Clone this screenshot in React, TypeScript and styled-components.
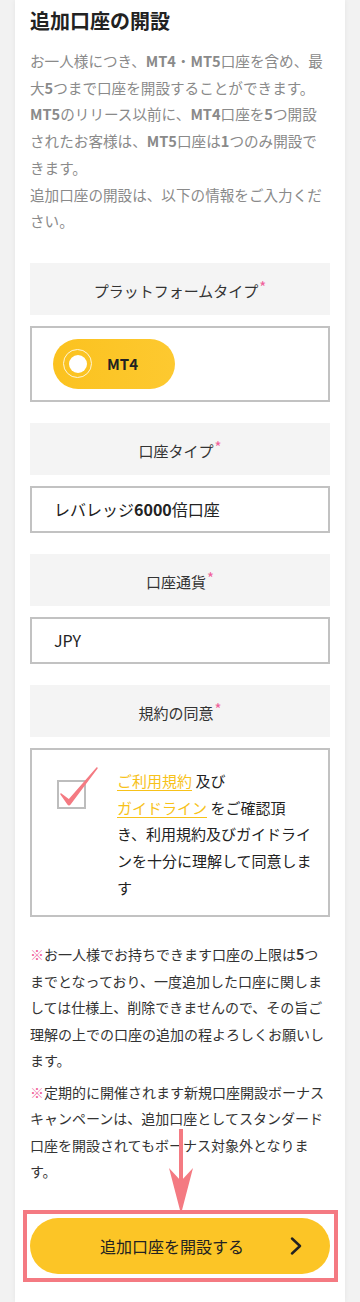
import React from "react";
import styled, {createGlobalStyle} from "styled-components";

const GlobalStyle = createGlobalStyle`
    body {
        margin: 0;
        background-color: #f2f2f2;
        font-family: "Noto Sans CJK JP", "Noto Sans", sans-serif;
        color: #333;
    }
`

const PINK = "#f47a82";

export default function App(){
    return(
        <>
            <GlobalStyle/>
            <Card>
                <Title>追加口座の開設</Title>
                <Intro>
                    お一人様につき、<b>MT4</b>・<b>MT5</b>口座を含め、最大<b>5</b>つまで口座を開設することができます。<br/>
                    <b>MT5</b>のリリース以前に、<b>MT4</b>口座を<b>5</b>つ開設されたお客様は、<b>MT5</b>口座は<b>1</b>つのみ開設できます。<br/>
                    追加口座の開設は、以下の情報をご入力ください。
                </Intro>

                <Label>プラットフォームタイプ<Required>*</Required></Label>
                <Field $padding="11px 21px">
                    <Pill>
                        <Radio/>
                        MT4
                    </Pill>
                </Field>

                <Label>口座タイプ<Required>*</Required></Label>
                <Field>レバレッジ<b>6000</b>倍口座</Field>

                <Label>口座通貨<Required>*</Required></Label>
                <Field>JPY</Field>

                <Label>規約の同意<Required>*</Required></Label>
                <AgreeBox>
                    <CheckBox>
                        <svg width="44" height="44" viewBox="0 0 44 44">
                            <path d="M4 28 L11 38 Q12 39.5 13 38 L40 2 L12 34 Z" fill={PINK} stroke={PINK} strokeWidth="1.5" strokeLinejoin="round"/>
                        </svg>
                    </CheckBox>
                    <AgreeText>
                        <Link>ご利用規約</Link> 及び<br/>
                        <Link>ガイドライン</Link> をご確認頂き、利用規約及びガイドラインを十分に理解して同意します
                    </AgreeText>
                </AgreeBox>

                <Note>
                    <Mark>※</Mark>お一人様でお持ちできます口座の上限は<b>5</b>つまでとなっており、一度追加した口座に関しましては仕様上、削除できませんので、その旨ご理解の上での口座の追加の程よろしくお願いします。
                </Note>
                <Note>
                    <Mark>※</Mark>定期的に開催されます新規口座開設ボーナスキャンペーンは、追加口座としてスタンダード口座を開設されてもボーナス対象外となります。
                </Note>

                <ButtonWrap>
                    <Arrow width="26" height="86" viewBox="0 0 26 86">
                        <rect x="11" y="0" width="4" height="60" fill={PINK}/>
                        <path d="M1 39 L13 52 L25 39 L13 85 Z" fill={PINK}/>
                    </Arrow>
                    <Highlight/>
                    <SubmitButton>
                        追加口座を開設する
                        <Chevron width="12" height="18" viewBox="0 0 12 18">
                            <path d="M2 1.5 L10 9 L2 16.5" fill="none" stroke="#222" strokeWidth="2.4" strokeLinecap="round" strokeLinejoin="round"/>
                        </Chevron>
                    </SubmitButton>
                </ButtonWrap>
            </Card>
        </>
    )
}

const Card = styled.div`
    margin: 0 15px;
    padding: 6px 15px 28px;
    background-color: white;
    box-shadow: 0 0 5px rgba(0, 0, 0, 0.06);
    min-height: 1268px;
`

const Title = styled.h1`
    margin: 0;
    font-size: 20px;
    line-height: 30px;
    font-weight: 700;
    color: #222;
`

const Intro = styled.p`
    max-width: 296px;
    margin: 12px 0 28px;
    font-size: 14.6px;
    line-height: 26.7px;
    color: #8a8a8a;
    b{
        font-weight: 700;
    }
`

const Label = styled.div`
    height: 52px;
    box-sizing: border-box;
    padding-top: 15px;
    background-color: #f4f4f4;
    text-align: center;
    font-size: 15px;
    line-height: 26px;
    color: #333;
`

const Required = styled.span`
    color: #f0609a;
    font-size: 15px;
    position: relative;
    top: -4px;
    margin-left: 1px;
`

const Field = styled.div<{$padding?: string}>`
    margin: 11px 0 21px;
    border: 2px solid #c2c2c2;
    padding: ${props => props.$padding ?? "8px 22px"};
    font-size: 16px;
    line-height: 27px;
    color: #222;
    b{
        font-weight: 700;
    }
`

const Pill = styled.div`
    display: inline-flex;
    align-items: center;
    gap: 15px;
    width: 122px;
    height: 50px;
    box-sizing: border-box;
    padding-left: 10px;
    border-radius: 25px;
    background: linear-gradient(90deg, #fbc21f, #fdc930);
    font-size: 15px;
    font-weight: 600;
    color: #222;
`

const Radio = styled.span`
    width: 29px;
    height: 29px;
    box-sizing: border-box;
    border-radius: 50%;
    border: 1px solid #fff6d8;
    display: flex;
    align-items: center;
    justify-content: center;
    &::after{
        content: "";
        width: 18px;
        height: 18px;
        border-radius: 50%;
        background-color: white;
    }
`

const AgreeBox = styled.div`
    margin-top: 11px;
    border: 2px solid #c2c2c2;
    padding: 18px 10px 14px 25px;
    display: flex;
    gap: 31px;
`

const CheckBox = styled.div`
    position: relative;
    flex: none;
    margin-top: 12px;
    width: 25px;
    height: 25px;
    border: 2px solid #bdbdbd;
    svg{
        position: absolute;
        left: -2px;
        top: -16px;
    }
`

const AgreeText = styled.div`
    width: 196px;
    font-size: 15px;
    line-height: 26.7px;
    color: #222;
`

const Link = styled.span`
    color: #f7c21a;
    text-decoration: underline;
    text-underline-offset: 3px;
`

const Note = styled.p`
    margin: 24px 0 4px;
    font-size: 14px;
    line-height: 26.5px;
    color: #333;
    & + &{
        margin-top: 5px;
    }
    b{
        font-weight: 700;
    }
`

const Mark = styled.span`
    color: #f0609a;
`

const ButtonWrap = styled.div`
    position: relative;
    margin-top: 33px;
`

const Arrow = styled.svg`
    position: absolute;
    left: 138px;
    top: -89px;
`

const Highlight = styled.div`
    position: absolute;
    left: -7px;
    right: -8px;
    top: -8px;
    bottom: -8px;
    border: 4px solid ${PINK};
    pointer-events: none;
`

const SubmitButton = styled.button`
    position: relative;
    width: 100%;
    height: 56px;
    border: none;
    border-radius: 28px;
    background-color: #fcc526;
    font-family: inherit;
    font-size: 16px;
    color: #222;
    padding-right: 22px;
    cursor: pointer;
`

const Chevron = styled.svg`
    position: absolute;
    right: 28px;
    top: 19px;
`
